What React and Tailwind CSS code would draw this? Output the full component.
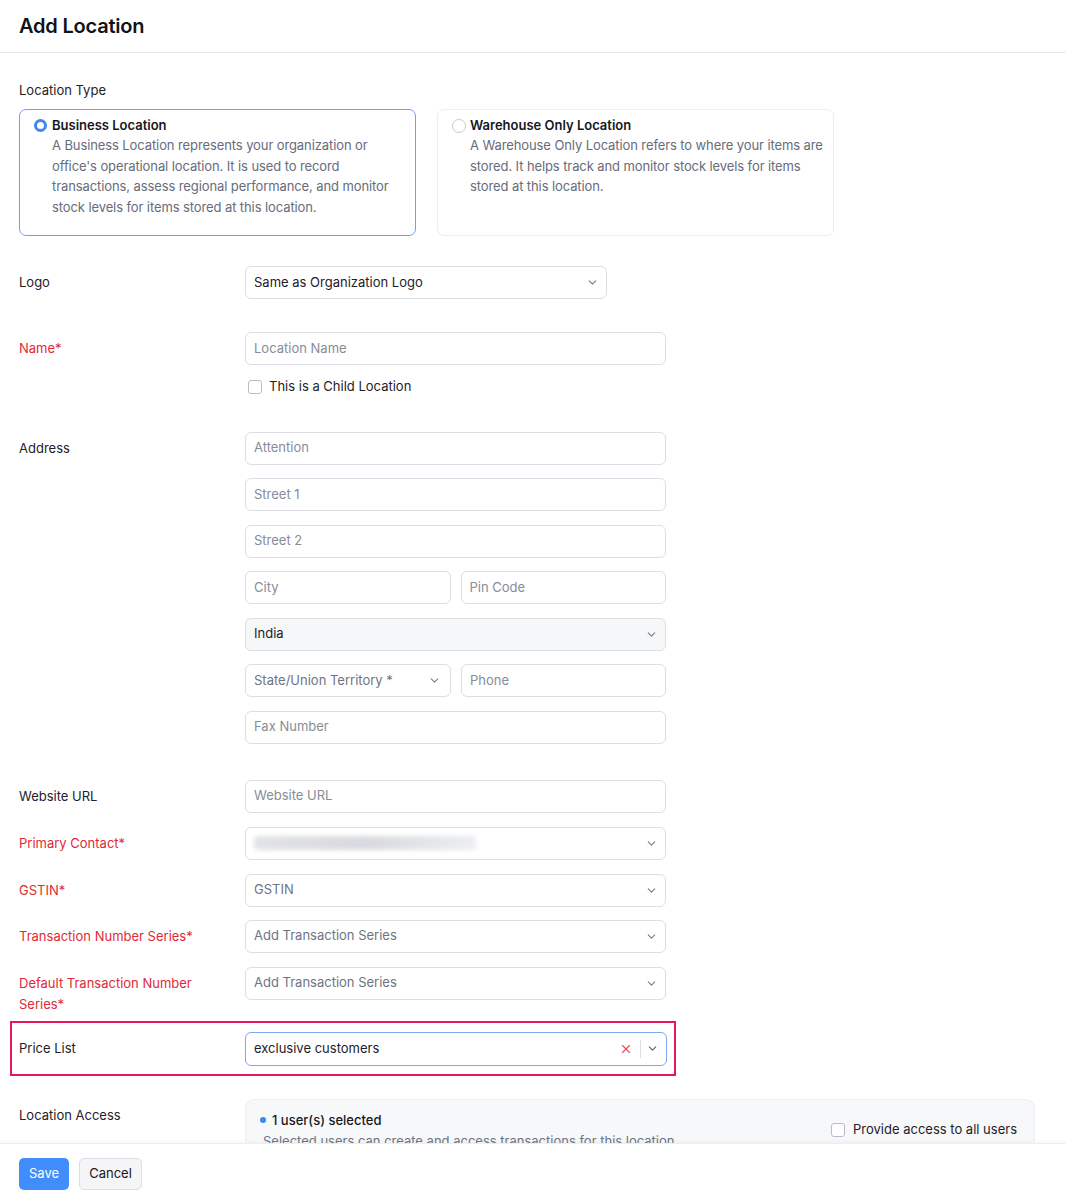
import { ChevronDown, X } from "lucide-react";

const font = { fontFamily: "Inter, 'Noto Sans', sans-serif" };

const Input = ({ placeholder, className = "" }) => (
  <div
    className={`h-[33px] flex items-center px-[8px] border border-[#dcdee4] rounded-[6px] bg-white text-[13px] text-[#878c99] ${className}`}
  >
    {placeholder}
  </div>
);

const Select = ({ value, placeholder, className = "", bg = "bg-white", children }) => (
  <div
    className={`h-[33px] flex items-center pl-[8px] pr-[7px] border border-[#dcdee4] rounded-[6px] ${bg} text-[13px] ${className}`}
  >
    <div className="flex-1 min-w-0">
      {children ? children : value ? (
        <span className="text-[#1f2129]">{value}</span>
      ) : (
        <span className="text-[#6f7482]">{placeholder}</span>
      )}
    </div>
    <ChevronDown size={13} strokeWidth={2} className="text-[#777c88]" />
  </div>
);

const Label = ({ children, required }) => (
  <div
    className={`w-[226px] shrink-0 pt-[6px] pr-[30px] leading-[21px] text-[13px] ${
      required ? "text-[#df2a35]" : "text-[#1f2129]"
    }`}
  >
    <div className="max-w-[185px]">{children}</div>
  </div>
);

const Row = ({ label, required, className = "", children }) => (
  <div className={`flex ${className}`}>
    <Label required={required}>{label}</Label>
    {children}
  </div>
);

const TypeCard = ({ selected, title, text }) => (
  <div
    className={`w-[397px] h-[127px] rounded-[7px] border pt-[5px] pl-[14px] pr-[6px] ${
      selected ? "border-[#70a2ec]" : "border-[#eceef1]"
    }`}
  >
    <div className="flex">
      <div className="w-[18px] pt-[4px] shrink-0">
        {selected ? (
          <div className="w-[13px] h-[13px] rounded-full border-[3.5px] border-[#3f86f5] bg-white" />
        ) : (
          <div className="w-[14px] h-[14px] rounded-full border border-[#c8cbd2] bg-white" />
        )}
      </div>
      <div>
        <div className="text-[13px] leading-[20px] font-semibold text-[#16181d]">{title}</div>
        <p className="text-[13px] leading-[20.7px] tracking-[-0.1px] text-[#676c7b]">{text}</p>
      </div>
    </div>
  </div>
);

export default function App() {
  return (
    <div style={font} className="h-[1200px] w-[1066px] flex flex-col bg-white overflow-hidden">
      <header className="h-[53px] shrink-0 border-b border-[#e8e9ec] flex items-center px-[19px]">
        <h1 className="text-[20px] font-semibold text-[#111318] tracking-[-0.2px]">Add Location</h1>
      </header>

      <main className="flex-1 overflow-hidden px-[19px] pt-[27px]">
        <div className="text-[13px] leading-[20px] text-[#1f2129]">Location Type</div>
        <div className="flex gap-[21px] mt-[9px]">
          <TypeCard
            selected
            title="Business Location"
            text="A Business Location represents your organization or office's operational location. It is used to record transactions, assess regional performance, and monitor stock levels for items stored at this location."
          />
          <TypeCard
            title="Warehouse Only Location"
            text="A Warehouse Only Location refers to where your items are stored. It helps track and monitor stock levels for items stored at this location."
          />
        </div>

        <Row label="Logo" className="mt-[30px]">
          <Select value="Same as Organization Logo" className="w-[362px] h-[32px]" />
        </Row>

        <Row label="Name*" required className="mt-[33px]">
          <div className="w-[421px]">
            <Input placeholder="Location Name" />
            <label className="flex items-center gap-[7px] mt-[12px] pl-[3px] text-[13px] text-[#1f2129]">
              <span className="w-[14px] h-[14px] rounded-[3px] border border-[#b9bcc4] bg-white" />
              This is a Child Location
            </label>
          </div>
        </Row>

        <Row label="Address" className="mt-[35px]">
          <div className="w-[421px] flex flex-col gap-[13.5px]">
            <Input placeholder="Attention" />
            <Input placeholder="Street 1" />
            <Input placeholder="Street 2" />
            <div className="flex gap-[10px]">
              <Input placeholder="City" className="flex-1" />
              <Input placeholder="Pin Code" className="flex-1" />
            </div>
            <Select value="India" bg="bg-[#f6f7f9]" />
            <div className="flex gap-[10px]">
              <Select placeholder="State/Union Territory *" className="flex-1 pr-[9px]" />
              <Input placeholder="Phone" className="flex-1" />
            </div>
            <Input placeholder="Fax Number" />
          </div>
        </Row>

        <Row label="Website URL" className="mt-[36px]">
          <Input placeholder="Website URL" className="w-[421px]" />
        </Row>

        <Row label="Primary Contact*" required className="mt-[14px]">
          <Select className="w-[421px]">
            <div className="h-[14px] w-[222px] rounded-[4px] bg-gradient-to-r from-[#e2e3e8] via-[#d9dae0] to-[#eceef1] blur-[2px]" />
          </Select>
        </Row>

        <Row label="GSTIN*" required className="mt-[14px]">
          <Select placeholder="GSTIN" className="w-[421px]" />
        </Row>

        <Row label="Transaction Number Series*" required className="mt-[13px]">
          <Select placeholder="Add Transaction Series" className="w-[421px]" />
        </Row>

        <Row label="Default Transaction Number Series*" required className="mt-[14px]">
          <Select placeholder="Add Transaction Series" className="w-[421px]" />
        </Row>

        <div className="-ml-[9px] mt-[6px] w-[666px] border-2 border-[#e8175b] pl-[7px] pr-[7px] pt-[9px] pb-[8px] flex">
          <Label>Price List</Label>
          <div className="w-[422px] h-[34px] flex items-center pl-[8px] pr-[7px] border border-[#7ea9ee] rounded-[6px] text-[13px] text-[#1f2129]">
            <span className="flex-1">exclusive customers</span>
            <X size={14} strokeWidth={2} color="#ec4a55" className="mr-[7px]" />
            <span className="w-px h-[18px] bg-[#dcdee4] mr-[5px]" />
            <ChevronDown size={13} strokeWidth={2} className="text-[#5d616c]" />
          </div>
        </div>

        <Row label="Location Access" className="mt-[23px]">
          <div className="w-[790px] h-[80px] rounded-[9px] bg-[#f7f8fa] border border-[#eef0f3] pl-[12px] pr-[17px] pt-[10px] flex">
            <div className="flex-1">
              <div className="flex items-center gap-[6px] text-[13px] font-medium text-[#16181d] leading-[20px]">
                <span className="w-[6px] h-[6px] rounded-full bg-[#3f86f5] ml-[2px]" />
                1 user(s) selected
              </div>
              <div className="pl-[5px] text-[13px] leading-[22px] text-[#6f7482]">
                Selected users can create and access transactions for this location
              </div>
            </div>
            <label className="flex items-center gap-[8px] h-[40px] text-[13px] text-[#1f2129]">
              <span className="w-[14px] h-[14px] rounded-[3px] border border-[#b9bcc4] bg-white" />
              Provide access to all users
            </label>
          </div>
        </Row>
      </main>

      <footer className="h-[57px] shrink-0 border-t border-[#eceef1] shadow-[0_-2px_4px_rgba(0,0,0,0.03)] bg-white flex items-start gap-[10px] px-[19px] pt-[14px]">
        <button className="h-[32px] w-[50px] rounded-[5px] bg-[#408dfb] text-white text-[13px]">Save</button>
        <button className="h-[32px] w-[63px] rounded-[5px] bg-[#f5f5f7] border border-[#dcdee4] text-[#16181d] text-[13px]">
          Cancel
        </button>
      </footer>
    </div>
  );
}
